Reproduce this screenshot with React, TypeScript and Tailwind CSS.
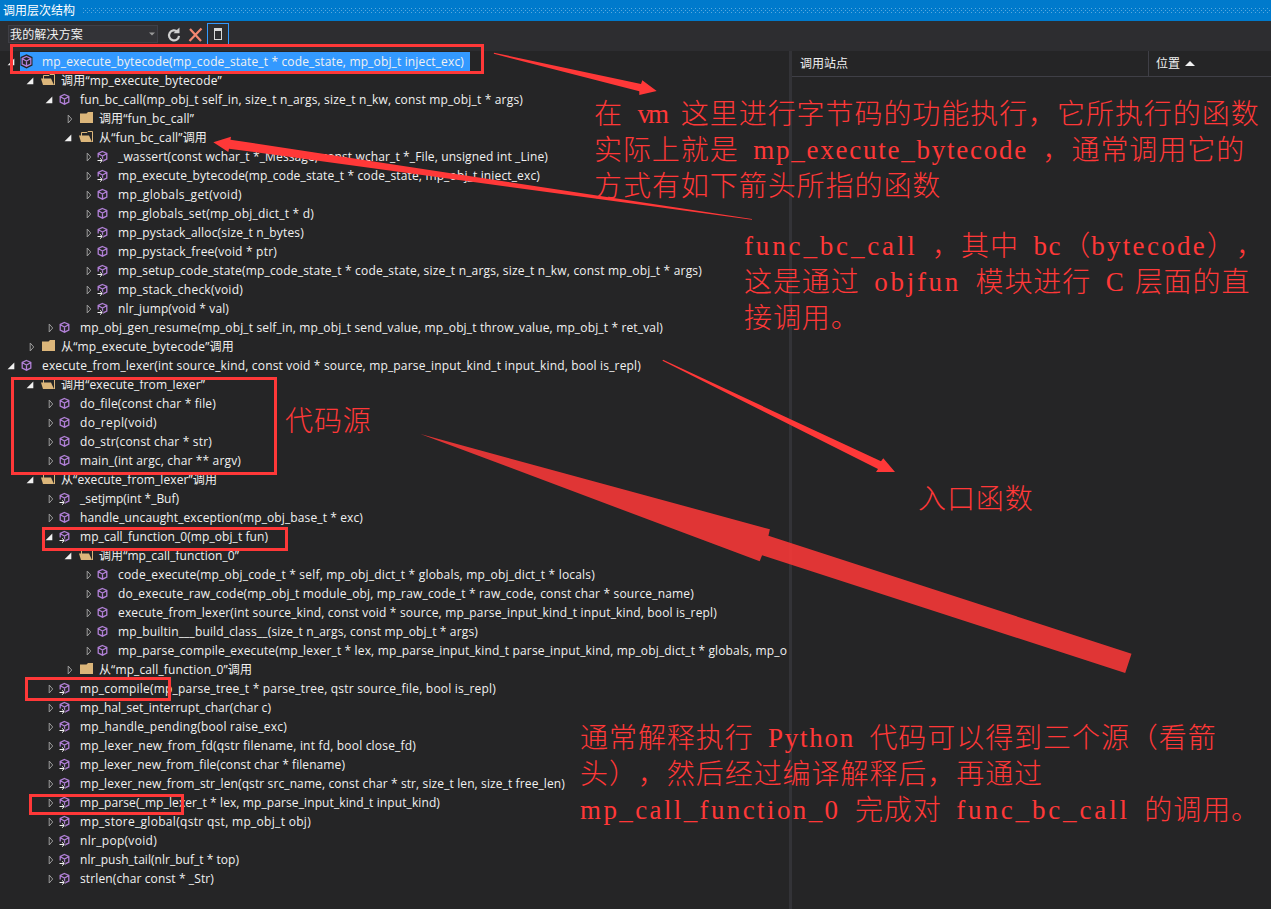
import { useLayoutEffect, useRef } from 'react'

interface FitProps {
  text: string
  width?: number
  className?: string
}

// Spreads the letters so that the text takes exactly `width` pixels
function Fit({ text, width, className = '' }: FitProps) {
  const ref = useRef<HTMLSpanElement>(null)

  useLayoutEffect(() => {
    const el = ref.current
    if (!el || !width) return
    el.style.letterSpacing = '0px'
    const natural = el.getBoundingClientRect().width
    el.style.letterSpacing = `${(width - natural) / text.length}px`
  }, [text, width])

  return (
    <span ref={ref} className={`inline-block whitespace-pre ${className}`}>
      {text}
    </span>
  )
}

interface Row {
  level: number
  icon: 'fn' | 'ext' | 'dir'
  text: string
  width: number
  open?: boolean
  selected?: boolean
}

const rows: Row[] = [
  { level: 0, icon: 'fn', text: 'mp_execute_bytecode(mp_code_state_t * code_state, mp_obj_t inject_exc)', width: 422, open: true, selected: true },
  { level: 1, icon: 'dir', text: '调用“mp_execute_bytecode”', width: 161, open: true },
  { level: 2, icon: 'fn', text: 'fun_bc_call(mp_obj_t self_in, size_t n_args, size_t n_kw, const mp_obj_t * args)', width: 443, open: true },
  { level: 3, icon: 'dir', text: '调用“fun_bc_call”', width: 95 },
  { level: 3, icon: 'dir', text: '从“fun_bc_call”调用', width: 108, open: true },
  { level: 4, icon: 'ext', text: '_wassert(const wchar_t *_Message, const wchar_t *_File, unsigned int _Line)', width: 430 },
  { level: 4, icon: 'ext', text: 'mp_execute_bytecode(mp_code_state_t * code_state, mp_obj_t inject_exc)', width: 422 },
  { level: 4, icon: 'fn', text: 'mp_globals_get(void)', width: 124 },
  { level: 4, icon: 'fn', text: 'mp_globals_set(mp_obj_dict_t * d)', width: 196 },
  { level: 4, icon: 'ext', text: 'mp_pystack_alloc(size_t n_bytes)', width: 186 },
  { level: 4, icon: 'fn', text: 'mp_pystack_free(void * ptr)', width: 159 },
  { level: 4, icon: 'ext', text: 'mp_setup_code_state(mp_code_state_t * code_state, size_t n_args, size_t n_kw, const mp_obj_t * args)', width: 584 },
  { level: 4, icon: 'ext', text: 'mp_stack_check(void)', width: 125 },
  { level: 4, icon: 'ext', text: 'nlr_jump(void * val)', width: 111 },
  { level: 2, icon: 'fn', text: 'mp_obj_gen_resume(mp_obj_t self_in, mp_obj_t send_value, mp_obj_t throw_value, mp_obj_t * ret_val)', width: 583 },
  { level: 1, icon: 'dir', text: '从“mp_execute_bytecode”调用', width: 173 },
  { level: 0, icon: 'fn', text: 'execute_from_lexer(int source_kind, const void * source, mp_parse_input_kind_t input_kind, bool is_repl)', width: 599, open: true },
  { level: 1, icon: 'dir', text: '调用“execute_from_lexer”', width: 144, open: true },
  { level: 2, icon: 'fn', text: 'do_file(const char * file)', width: 136 },
  { level: 2, icon: 'fn', text: 'do_repl(void)', width: 77 },
  { level: 2, icon: 'fn', text: 'do_str(const char * str)', width: 132 },
  { level: 2, icon: 'fn', text: 'main_(int argc, char ** argv)', width: 161 },
  { level: 1, icon: 'dir', text: '从“execute_from_lexer”调用', width: 156, open: true },
  { level: 2, icon: 'ext', text: '_setjmp(int *_Buf)', width: 99 },
  { level: 2, icon: 'fn', text: 'handle_uncaught_exception(mp_obj_base_t * exc)', width: 283 },
  { level: 2, icon: 'ext', text: 'mp_call_function_0(mp_obj_t fun)', width: 188, open: true },
  { level: 3, icon: 'dir', text: '调用“mp_call_function_0”', width: 140, open: true },
  { level: 4, icon: 'fn', text: 'code_execute(mp_obj_code_t * self, mp_obj_dict_t * globals, mp_obj_dict_t * locals)', width: 477 },
  { level: 4, icon: 'fn', text: 'do_execute_raw_code(mp_obj_t module_obj, mp_raw_code_t * raw_code, const char * source_name)', width: 576 },
  { level: 4, icon: 'fn', text: 'execute_from_lexer(int source_kind, const void * source, mp_parse_input_kind_t input_kind, bool is_repl)', width: 599 },
  { level: 4, icon: 'fn', text: 'mp_builtin___build_class__(size_t n_args, const mp_obj_t * args)', width: 360 },
  { level: 4, icon: 'fn', text: 'mp_parse_compile_execute(mp_lexer_t * lex, mp_parse_input_kind_t parse_input_kind, mp_obj_dict_t * globals, mp_o', width: 669 },
  { level: 3, icon: 'dir', text: '从“mp_call_function_0”调用', width: 153 },
  { level: 2, icon: 'ext', text: 'mp_compile(mp_parse_tree_t * parse_tree, qstr source_file, bool is_repl)', width: 416 },
  { level: 2, icon: 'ext', text: 'mp_hal_set_interrupt_char(char c)', width: 191 },
  { level: 2, icon: 'ext', text: 'mp_handle_pending(bool raise_exc)', width: 207 },
  { level: 2, icon: 'ext', text: 'mp_lexer_new_from_fd(qstr filename, int fd, bool close_fd)', width: 336 },
  { level: 2, icon: 'ext', text: 'mp_lexer_new_from_file(const char * filename)', width: 265 },
  { level: 2, icon: 'ext', text: 'mp_lexer_new_from_str_len(qstr src_name, const char * str, size_t len, size_t free_len)', width: 485 },
  { level: 2, icon: 'ext', text: 'mp_parse(_mp_lexer_t * lex, mp_parse_input_kind_t input_kind)', width: 360 },
  { level: 2, icon: 'ext', text: 'mp_store_global(qstr qst, mp_obj_t obj)', width: 231 },
  { level: 2, icon: 'ext', text: 'nlr_pop(void)', width: 77 },
  { level: 2, icon: 'ext', text: 'nlr_push_tail(nlr_buf_t * top)', width: 159 },
  { level: 2, icon: 'ext', text: 'strlen(char const * _Str)', width: 134 },
]

function Expander({ open }: { open?: boolean }) {
  return (
    <svg className="w-[14px] h-[19px] shrink-0" viewBox="0 0 14 19">
      {open ? (
        <path d="M8.300 6.500V13.200H1.600z" fill="#f1f1f1" />
      ) : (
        <path d="M5.200 6v8l3.500-4z" fill="none" stroke="#9a9a9a" />
      )}
    </svg>
  )
}

function RowIcon({ icon, open, selected }: { icon: Row['icon']; open?: boolean; selected?: boolean }) {
  if (icon === 'dir') {
    return (
      <svg className="w-[20px] h-[19px] shrink-0" viewBox="2 0 20 19">
        {open ? (
          <>
            <path d="M6.500 8V4.500h5.500l1-1h4.500V14" fill="none" stroke="#dcb67a" />
            <path d="M4 7.500h10l3 6.500H6z" fill="#dcb67a" />
          </>
        ) : (
          <path d="M5 4.500h6.500l1.500-1.500h5v11H5z" fill="#dcb67a" />
        )}
      </svg>
    )
  }
  return (
    <svg className="w-[20px] h-[19px] shrink-0" viewBox="2 0 20 19">
      {selected && <path d="M8.500 2.300l6 2.700v8.500l-6 3-6-3V5z" fill="#252526" />}
      <path
        d="M8.500 4.500L12.800 6.500v5.500L8.500 14.200L4.200 12V6.500zM4.400 6.700L8.500 9l4.100-2.300M8.500 9v5"
        fill="none"
        stroke="#b180d7"
        strokeWidth="1.300"
      />
      {icon === 'ext' && (
        <>
          <path d="M2.500 10.500h5l2 3-2 3h-5z" fill="#252526" />
          <path d="M3.500 13.500h4.500M6 11.300l2.300 2.200L6 15.700" fill="none" stroke="#f1f1f1" />
        </>
      )}
    </svg>
  )
}

function TreeRow({ row }: { row: Row }) {
  return (
    <div className="flex h-[19px] items-center" style={{ paddingLeft: 6 + row.level * 19 }}>
      <Expander open={row.open} />
      <div className={`flex h-[19px] items-center pr-[6px] ${row.selected ? 'bg-[#3399ff]' : ''}`}>
        <RowIcon icon={row.icon} open={row.open} selected={row.selected} />
        <Fit text={row.text} width={row.width} className="ml-[2px] leading-[19px]" />
      </div>
    </div>
  )
}

const CELL = 14.47

// Half-width characters take one cell, Chinese characters take two
function Note({ lines, className }: { lines: string[]; className: string }) {
  return (
    <div className={`absolute text-[#ff3838] ${className}`}>
      {lines.map((line) => (
        <div key={line} className="flex h-[36px] items-start whitespace-pre">
          {line.match(/ |[!-~]+|[^ -~]+/g)?.map((part, i) => {
            const latin = /^[ -~]/.test(part)
            const width = part.length * CELL * (latin ? 1 : 2)
            return (
              <span key={i} className="flex shrink-0" style={{ width }}>
                <Fit
                  text={part}
                  width={width}
                  className={
                    latin
                      ? "font-['Liberation_Serif',serif] text-[27px] leading-[36px]"
                      : "font-['Noto_Sans_CJK_SC',sans-serif] text-[28px] leading-[32px] font-light [text-spacing-trim:space-all]"
                  }
                />
              </span>
            )
          })}
        </div>
      ))}
    </div>
  )
}

function TitleDots() {
  return (
    <svg className="ml-[8px] h-[5px] flex-1" shapeRendering="crispEdges">
      <pattern id="dots" width="4" height="4" patternUnits="userSpaceOnUse">
        <rect width="1" height="1" fill="#59a8de" />
        <rect x="2" y="2" width="1" height="1" fill="#59a8de" />
      </pattern>
      <rect width="100%" height="5" fill="url(#dots)" />
    </svg>
  )
}

function Toolbar() {
  return (
    <div className="flex h-[30px] bg-[#2d2d30] pl-[8px] pt-[2px]">
      <div className="mt-[2px] flex h-[18px] w-[150px] items-center justify-between border border-[#3f3f46] bg-[#333337] pl-px pr-[2px]">
        <Fit text="我的解决方案" width={73} />
        <svg width="6" height="4" viewBox="0 0 6 4">
          <path d="M0 .5h6l-3 3z" fill="#999999" />
        </svg>
      </div>
      <svg className="ml-[8px] mt-[3px]" width="16" height="18" viewBox="0 0 16 18">
        <path d="M11.500 5.800A5 5 0 1 0 13 9.800" fill="none" stroke="#d0d0d0" strokeWidth="2.200" />
        <path d="M7.500 7.200h6V1.500z" fill="#d0d0d0" />
      </svg>
      <svg className="ml-[6px] mt-[3px]" width="15" height="17" viewBox="0 0 15 17">
        <path d="M2 3l11 12M13.500 2.500L1.500 15" stroke="#f48771" strokeWidth="2.200" fill="none" />
      </svg>
      <div className="ml-[4px] flex h-[22px] w-[22px] items-center justify-center border border-[#3399ff]">
        <div className="h-[12px] w-[8px] border border-t-[3px] border-[#d8d8d8]" />
      </div>
    </div>
  )
}

const boxes = [
  'left-[10px] top-[44px] w-[474px] h-[30px]',
  'left-[11px] top-[377px] w-[266px] h-[98px]',
  'left-[42px] top-[527px] w-[246px] h-[24px]',
  'left-[25px] top-[677px] w-[146px] h-[24px]',
  'left-[29px] top-[794px] w-[155px] h-[21px]',
]

export default function App() {
  return (
    <div className="relative flex h-[909px] w-[1271px] flex-col overflow-hidden bg-[#252526] font-['Open_Sans','Noto_Sans_CJK_SC',sans-serif] text-[12px] leading-[19px] text-[#f1f1f1]">
      <div className="flex h-[21px] items-center bg-[#007acc] pl-[3px] text-white">
        <Fit text="调用层次结构" width={72} />
        <TitleDots />
      </div>
      <Toolbar />
      <div className="flex min-h-0 flex-1">
        <div className="w-[789px] overflow-hidden pt-px">
          {rows.map((row, i) => (
            <TreeRow key={i} row={row} />
          ))}
        </div>
        <div className="w-[3px] bg-[#333337]" />
        <div className="flex-1">
          <div className="flex h-[26px] items-center border-b border-[#3f3f46]">
            <div className="h-full w-[357px] border-r border-[#3f3f46] pl-[8px] pt-[3px]">调用站点</div>
            <div className="flex items-center gap-[5px] pl-[7px]">
              位置
              <svg width="10" height="5" viewBox="0 0 10 5">
                <path d="M0 5l5-5 5 5z" fill="#f1f1f1" />
              </svg>
            </div>
          </div>
        </div>
      </div>

      {boxes.map((box) => (
        <div key={box} className={`absolute border-3 border-[#ff3838] ${box}`} />
      ))}

      <svg className="absolute left-0 top-0" width="1271" height="909" viewBox="0 0 1271 909" fill="#ff3838">
        <path d="M494 52.700L641 84L642.300 80.300L656.700 91L639.300 95L639.300 91.300L493.800 53.800z" />
        <path d="M213.300 142.300L231 136.700L230.500 139.700L752 219L752 219.800L229 148.700L228.300 152z" />
        <path d="M663 359.800L881 461.300L883.300 458.300L895 472L876 472L878 469L662.500 360.800z" />
        <path
          d="M420.400 434L769.900 529.300L768.400 535.700L1131.500 653.700L1125.200 673L762.100 555.300L759.700 561.300z"
          fillOpacity="0.86"
        />
      </svg>

      <Note
        className="left-[594px] top-[96px]"
        lines={[
          '在 vm 这里进行字节码的功能执行，它所执行的函数',
          '实际上就是 mp_execute_bytecode ，通常调用它的',
          '方式有如下箭头所指的函数',
        ]}
      />
      <Note
        className="left-[744px] top-[228px]"
        lines={['func_bc_call ，其中 bc（bytecode），', '这是通过 objfun 模块进行 C 层面的直', '接调用。']}
      />
      <Note className="left-[285px] top-[403px]" lines={['代码源']} />
      <Note className="left-[918px] top-[481px]" lines={['入口函数']} />
      <Note
        className="left-[580px] top-[720px]"
        lines={[
          '通常解释执行 Python 代码可以得到三个源（看箭',
          '头），然后经过编译解释后，再通过',
          'mp_call_function_0 完成对 func_bc_call 的调用。',
        ]}
      />
    </div>
  )
}
